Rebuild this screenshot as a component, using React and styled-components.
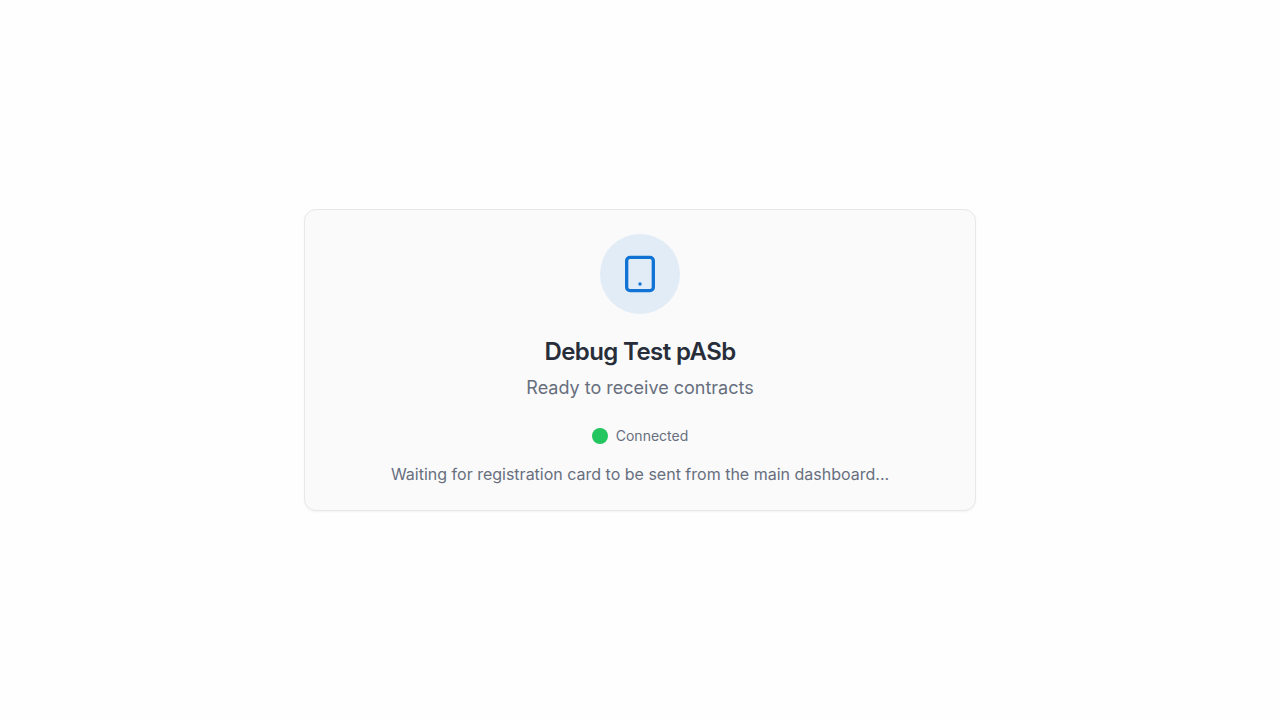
import React from "react";
import styled, { createGlobalStyle } from "styled-components";
import { Tablet } from "lucide-react";

const GlobalStyle = createGlobalStyle`
  *, *::before, *::after { box-sizing: border-box; }
  body {
    margin: 0;
    background: #fefefe;
    font-family: Inter, "Liberation Sans", sans-serif;
  }
`;

const Page = styled.main`
  min-height: 100vh;
  display: flex;
  align-items: center;
  justify-content: center;
  padding: 16px;
`;

const Card = styled.section`
  width: 100%;
  max-width: 672px;
  padding: 24px;
  display: flex;
  flex-direction: column;
  align-items: center;
  text-align: center;
  background: #fafafa;
  border: 1px solid #e8e8e8;
  border-radius: 12px;
  box-shadow: 0 1px 2px rgba(0, 0, 0, 0.05);
`;

const IconCircle = styled.div`
  display: flex;
  align-items: center;
  justify-content: center;
  width: 80px;
  height: 80px;
  margin-bottom: 24px;
  border-radius: 50%;
  background: #e2ecf7;
  color: #1173d4;
`;

const Title = styled.h1`
  margin: 0 0 8px;
  font-size: 24px;
  line-height: 28px;
  font-weight: 600;
  letter-spacing: -0.6px;
  color: #272e3a;
`;

const Subtitle = styled.p`
  margin: 0 0 24px;
  font-size: 18px;
  line-height: 28px;
  color: #676f7e;
`;

const Status = styled.div`
  display: flex;
  align-items: center;
  gap: 8px;
  margin-bottom: 16px;
  font-size: 14px;
  line-height: 20px;
  color: #676f7e;
`;

const StatusDot = styled.span`
  width: 16px;
  height: 16px;
  border-radius: 50%;
  background: #22c55e;
`;

const Message = styled.p`
  margin: 0;
  font-size: 16px;
  line-height: 24px;
  color: #676f7e;
`;

export default function App() {
  return (
    <>
      <GlobalStyle />
      <Page>
        <Card>
          <IconCircle>
            <Tablet size={40} aria-hidden="true" />
          </IconCircle>
          <Title>Debug Test pASb</Title>
          <Subtitle>Ready to receive contracts</Subtitle>
          <Status role="status">
            <StatusDot />
            <span>Connected</span>
          </Status>
          <Message>Waiting for registration card to be sent from the main dashboard...</Message>
        </Card>
      </Page>
    </>
  );
}
